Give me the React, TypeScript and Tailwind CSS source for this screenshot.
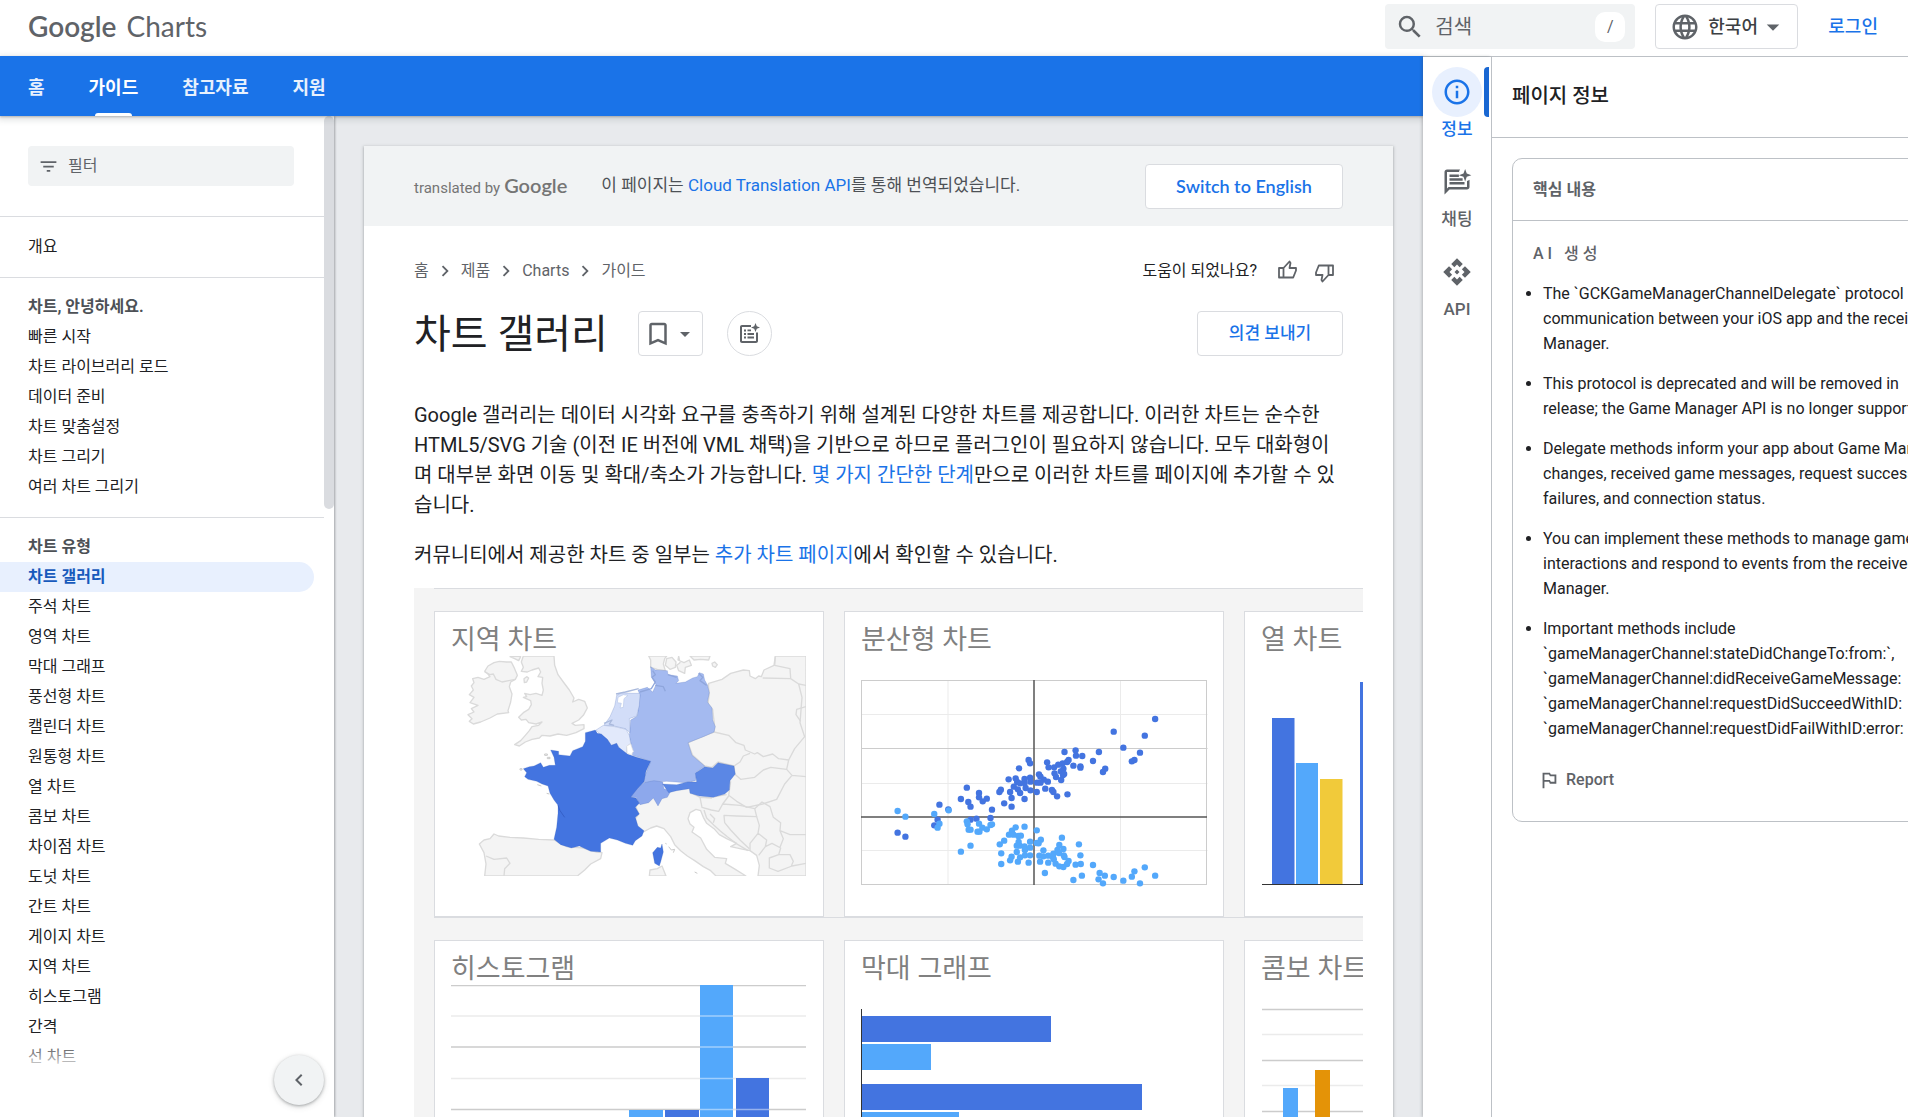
import React from 'react';
import {
  MdApi,
  MdArrowDropDown,
  MdBookmarkBorder,
  MdChevronLeft,
  MdChevronRight,
  MdFilterList,
  MdInfoOutline,
  MdLanguage,
  MdOutlinedFlag,
  MdSearch,
} from 'react-icons/md';

const BLUE = '#4374e0';
const SKY = '#53a8fb';

const navItems = ['홈', '가이드', '참고자료', '지원'];

const introLinks = ['빠른 시작', '차트 라이브러리 로드', '데이터 준비', '차트 맞춤설정', '차트 그리기', '여러 차트 그리기'];

const chartLinks = [
  '차트 갤러리',
  '주석 차트',
  '영역 차트',
  '막대 그래프',
  '풍선형 차트',
  '캘린더 차트',
  '원통형 차트',
  '열 차트',
  '콤보 차트',
  '차이점 차트',
  '도넛 차트',
  '간트 차트',
  '게이지 차트',
  '지역 차트',
  '히스토그램',
  '간격',
  '선 차트',
];

const takeaways = [
  [
    'The `GCKGameManagerChannelDelegate` protocol',
    'communication between your iOS app and the receiver',
    'Manager.',
  ],
  ['This protocol is deprecated and will be removed in', 'release; the Game Manager API is no longer supported.'],
  [
    'Delegate methods inform your app about Game Manager',
    'changes, received game messages, request success,',
    'failures, and connection status.',
  ],
  [
    'You can implement these methods to manage game',
    'interactions and respond to events from the receiver',
    'Manager.',
  ],
  [
    'Important methods include',
    '`gameManagerChannel:stateDidChangeTo:from:`,',
    '`gameManagerChannel:didReceiveGameMessage:',
    '`gameManagerChannel:requestDidSucceedWithID:',
    '`gameManagerChannel:requestDidFailWithID:error:',
  ],
];

function ChatSparkIcon() {
  return (
    <svg viewBox="0 0 24 24" className="size-[30px]" fill="currentColor" aria-hidden="true">
      <path d="M14.5 2H4c-1.1 0-2 .9-2 2v18l4-4h14c1.1 0 2-.9 2-2V10.2c-.6.5-1.3.8-2 1V16H5.2L4 17.2V4h9.600c.1-.8.4-1.500.9-2z" />
      <path d="M6 12h12v2H6zM6 9h10.500v2H6zM6 6h7.500v2H6z" />
      <path d="M18.500 1.500l1.300 3.700 3.700 1.300-3.700 1.300-1.300 3.700-1.300-3.700-3.700-1.300 3.700-1.300z" />
    </svg>
  );
}

function ListSparkIcon() {
  return (
    <svg viewBox="0 0 24 24" className="size-6" fill="currentColor" aria-hidden="true">
      <path d="M14 3H5c-1.100 0-2 .9-2 2v14c0 1.100.9 2 2 2h14c1.100 0 2-.9 2-2v-8.500h-2V19H5V5h9z" />
      <path d="M7 7.500h2v2H7zM7 11h2v2H7zM7 14.500h2v2H7zM10.500 7.500H14v1.800h-3.500zM10.500 11.100H17v1.800h-6.500zM10.500 14.600H17v1.800h-6.500z" />
      <path d="M18.500 1l1.300 3.200L23 5.500l-3.200 1.300L18.500 10l-1.300-3.200L14 5.500l3.200-1.300z" />
    </svg>
  );
}

const thumbPath = 'M2 9h4.500v9.500H2zM6.500 9L12.500 2.500 13.500 4 12.500 9H19v2.500L16.200 18.500H6.500';

function ThumbUpIcon() {
  return (
    <svg viewBox="0 0 21 21" className="mb-1 size-[21px]" fill="none" stroke="currentColor" strokeWidth="1.800" strokeLinejoin="round" aria-hidden="true">
      <path d={thumbPath} />
    </svg>
  );
}

function ThumbDownIcon() {
  return (
    <svg viewBox="0 0 21 21" className="mt-1 size-[21px]" fill="none" stroke="currentColor" strokeWidth="1.800" strokeLinejoin="round" aria-hidden="true">
      <path d={thumbPath} transform="rotate(180 10.5 10.5)" />
    </svg>
  );
}

/* ---------- Gallery drawings ---------- */

const landPaths = [
  'M340 228 L334 246 L340 262 L334 274 L352 276 L366 270 L386 264 L392 276 L384 290 L398 292 L396 310 L400 330 L396 346 L378 340 L360 344 L344 340 L350 350 L340 352 L362 362 L364 374 L356 388 L340 398 L326 412 L334 420 L348 418 L356 428 L378 432 L396 426 L386 436 L366 440 L358 452 L346 466 L332 482 L314 494 L328 498 L346 486 L366 478 L388 474 L396 466 L420 468 L444 462 L470 466 L498 458 L522 446 L522 434 L496 436 L486 430 L506 420 L520 406 L532 384 L524 364 L506 358 L488 366 L492 354 L478 330 L460 306 L444 284 L434 256 L432 228 Z',
  'M188 296 L204 292 L222 298 L240 290 L232 280 L224 274 L234 258 L252 248 L268 244 L290 246 L304 246 L312 262 L322 286 L316 298 L302 306 L298 320 L306 342 L302 366 L294 392 L296 398 L262 402 L240 414 L212 426 L190 432 L178 424 L186 416 L174 404 L192 396 L184 386 L204 376 L180 368 L192 352 L178 344 L190 330 L184 318 L192 308 Z',
  'M342 296 L350 290 L356 294 L350 306 L343 308 Z',
  'M300 230 L318 228 L332 230 L326 242 L314 236 Z',
  'M716 228 L722 240 L722 262 L742 268 L766 272 L760 252 L764 236 L770 228 Z',
  'M770 236 L786 232 L798 246 L796 262 L780 268 L766 256 Z',
  'M806 228 L804 240 L822 248 L838 240 L844 256 L826 262 L824 280 L806 272 L800 256 L810 248 Z',
  'M840 228 L852 240 L872 238 L896 240 L900 228 Z',
  'M906 250 L914 246 L922 254 L916 262 L908 258 Z',
  'M896 310 L936 298 L962 280 L1000 270 L1018 272 L1020 288 L1036 296 L1046 288 L1054 290 L1062 270 L1092 256 L1096 228 L1188 228 L1188 888 L1044 888 L1048 856 L1040 826 L1020 812 L1000 808 L962 800 L980 790 L950 776 L928 764 L912 746 L890 730 L880 712 L872 692 L858 688 L840 698 L834 716 L840 732 L852 742 L846 756 L872 774 L890 808 L914 832 L950 836 L946 850 L976 868 L1008 888 L918 888 L902 872 L880 860 L854 842 L832 828 L812 812 L794 794 L782 770 L762 746 L740 738 L722 744 L700 756 L680 744 L676 716 L686 702 L676 676 L700 640 L780 630 L840 620 L860 560 L834 488 L912 456 L894 370 Z',
  'M208 792 L222 780 L240 776 L252 762 L266 768 L300 772 L340 774 L386 778 L432 780 L470 800 L520 804 L560 816 L576 818 L572 836 L542 852 L524 870 L502 888 L224 888 L228 852 L222 818 Z',
  'M718 888 L720 870 L742 866 L756 858 L768 888 Z',
];

const borderPaths = [
  'M224 276 L240 284 L250 282 L258 298 L276 306 L296 302 L316 298',
  'M228 828 L252 838 L290 834 L300 850 L284 866 L282 888',
  'M894 314 L898 340 L894 370 L908 388 L914 440 L912 456 L956 466 L978 488 L1002 496 L1006 510 L1034 522 L1042 518 L1060 530 L1088 522 L1106 536 L1136 540 L1154 506 L1184 470 L1170 428 L1176 352 L1166 312 L1142 296 L1058 294 M912 456 L870 470 L834 488 L842 520 L884 558 L906 562 L924 546 L972 558',
  'M1096 230 L1094 256 L1140 266 L1142 294 M1166 312 L1188 316 M1188 380 L1160 388 L1158 404 L1172 424',
  'M972 558 L990 546 L1000 528 L1020 520 M972 558 L974 582 L992 598 L1034 592 L1060 570 L1082 562 L1130 568 L1136 540 M1130 568 L1146 586 L1188 590 M1146 586 L1124 612 L1100 658 L1058 672 L1010 682 L980 664 L956 646 L962 604',
  'M870 652 L876 682 L904 690 L926 694 L938 672 L956 648 M900 652 L950 644 M840 636 L870 652 L906 654 M938 672 L990 676 L1034 686 L1040 710 L980 708 L942 706 L944 728 L962 750 L990 780 L1018 806',
  'M1034 686 L1056 666 L1080 680 L1090 712 L1112 728 L1110 752 L1140 764 L1188 764 M1040 710 L1048 736 L1044 760 L1020 790 L1020 812 M1044 760 L1070 780 L1066 800 L1046 826 M1066 800 L1086 790 L1112 804 L1106 824 L1078 834 L1078 864 L1104 874 L1146 858 L1188 850 M1106 824 L1140 824 L1150 844 L1144 858 M1110 752 L1120 776 L1110 802',
  'M882 690 L890 714 L912 736 L930 752 L952 770 L984 794 L1014 812 M900 702 L914 716 L910 728',
];

const europe = [
  {
    name: 'germany',
    fill: '#a4baf0',
    d: 'M722 260 L736 270 L772 272 L774 284 L802 288 L806 302 L798 310 L826 306 L848 294 L862 290 L868 278 L880 282 L884 300 L892 314 L898 338 L892 366 L906 384 L908 420 L916 440 L912 456 L880 470 L834 488 L846 526 L884 558 L862 574 L856 602 L826 608 L770 604 L704 608 L702 594 L722 544 L668 526 L664 494 L658 470 L662 420 L682 408 L690 346 L684 330 L712 322 L728 336 L738 314 L724 290 Z',
  },
  {
    name: 'netherlands',
    fill: '#d2ddf8',
    d: 'M690 340 L688 376 L680 408 L658 416 L660 458 L646 446 L612 438 L582 436 L600 410 L614 378 L620 346 L634 338 L664 340 Z',
  },
  {
    name: 'belgium',
    fill: '#e2e9fb',
    d: 'M558 450 L580 436 L614 440 L648 448 L658 466 L662 490 L650 500 L650 522 L626 502 L620 490 L604 496 L592 478 L574 466 Z',
  },
  {
    name: 'switzerland',
    fill: '#8da8ec',
    d: 'M702 608 L732 602 L758 606 L762 626 L782 634 L772 652 L756 656 L744 678 L730 654 L716 668 L690 674 L678 652 L660 654 L680 626 Z',
  },
  {
    name: 'austria',
    fill: '#5b87e5',
    d: 'M758 612 L800 614 L832 606 L860 606 L856 580 L884 560 L908 564 L924 548 L972 558 L976 582 L960 602 L958 630 L944 642 L910 652 L868 648 L840 640 L838 626 L800 632 L776 638 Z',
  },
  {
    name: 'france',
    fill: BLUE,
    d: 'M526 458 L556 450 L562 460 L574 462 L592 478 L604 496 L620 490 L626 502 L652 522 L680 532 L722 544 L708 574 L702 606 L682 626 L662 652 L678 654 L688 670 L676 682 L688 702 L676 712 L684 738 L702 752 L696 768 L676 782 L668 796 L646 790 L622 780 L598 774 L572 790 L572 816 L542 814 L508 798 L484 804 L452 794 L432 778 L440 742 L444 700 L444 676 L432 660 L420 640 L414 618 L396 612 L380 604 L354 598 L344 590 L350 578 L340 566 L358 560 L372 558 L392 548 L400 562 L418 556 L436 556 L432 532 L422 510 L446 514 L446 524 L480 528 L488 512 L518 500 L526 484 Z',
  },
  { name: 'corsica', fill: BLUE, d: 'M756 792 L760 816 L752 846 L748 858 L734 850 L728 818 L742 802 L752 804 Z' },
];

function GeoChart() {
  return (
    <svg viewBox="123 228 1068 726" className="h-[242px] w-[356px]" role="img" aria-label="지역 차트">
      <clipPath id="map-area">
        <rect x="126" y="228" width="1062" height="660" />
      </clipPath>
      <g clipPath="url(#map-area)" strokeLinejoin="round">
        <g fill="#f4f4f4" stroke="#dadada" strokeWidth="4">
          {landPaths.map((d) => (
            <path key={d} d={d} />
          ))}
        </g>
        <g fill="none" stroke="#dadada" strokeWidth="4">
          {borderPaths.map((d) => (
            <path key={d} d={d} />
          ))}
        </g>
        {europe.map((c) => (
          <path key={c.name} d={c.d} fill={c.fill} stroke="#3c5fae" strokeOpacity=".3" strokeWidth="2" />
        ))}
        <path d="M624 352 L640 344 L654 346 L642 356 L640 382 L630 384 L634 370 L622 368 Z" fill="#fff" stroke="#b9c8e8" strokeWidth="2" />
        <path d="M650 498 L662 492 L670 514 L664 524 L652 520 Z" fill="#fff" stroke="#dcdcdc" strokeWidth="2" />
        <path d="M618 342 L646 336 L686 326 M582 430 L606 420 L598 432 L612 436" fill="none" stroke="#a9b9dc" strokeWidth="4" />
        <path d="M728 272 L736 284 L726 292 L736 306 L724 326 L690 336 M736 316 L760 320 L766 334 M774 284 L800 292 M866 280 L878 292 L870 302 L890 316" fill="none" stroke="#8fa6dc" strokeWidth="4" />
        <path d="M404 522 h8 v4 h-8z M412 532 h8 v4 h-8z M330 566 h6 v4 h-6z M382 614 l12 4 M410 640 l8 2 M776 800 l8 10 l10 -2 l-4 10 M854 876 l8 4 M766 790 l4 2" fill="none" stroke="#c9c9c9" strokeWidth="3" />
        <path d="M444 676 L450 692 L464 712" fill="none" stroke="#3560c8" strokeWidth="3" />
      </g>
    </svg>
  );
}

// Sample values on a 935 x 614 canvas, top-left origin.
const seriesA = [
  [795, 117], [683, 155], [767, 167], [709, 203], [754, 218], [739, 240], [732, 244], [660, 266], [654, 276], [643, 216],
  [627, 243], [580, 211], [581, 227], [598, 228], [550, 216], [561, 240], [574, 257], [593, 259], [593, 263], [545, 250],
  [503, 247], [507, 262], [522, 262], [533, 254], [547, 266], [540, 274], [523, 280], [546, 285], [527, 291], [541, 300],
  [481, 283], [485, 290], [494, 299], [505, 305], [485, 308], [476, 308], [498, 326], [516, 330], [520, 336], [530, 349],
  [558, 343], [453, 240], [457, 250], [427, 265], [399, 298], [418, 295], [422, 306], [442, 297], [442, 309], [457, 293],
  [458, 305], [430, 310], [413, 320], [424, 328], [445, 324], [458, 331], [475, 336], [430, 339], [403, 336], [378, 329],
  [374, 336], [407, 354], [442, 357], [387, 370], [407, 380], [354, 389], [350, 414], [340, 356], [319, 339], [319, 352],
  [329, 364], [286, 323], [270, 357], [290, 366], [296, 380], [312, 416], [296, 419], [212, 374], [236, 388], [207, 419],
  [198, 436], [99, 458], [120, 470], [557, 246], [549, 282],
];

const seriesB = [
  [99, 393], [120, 410], [198, 402], [237, 391], [212, 431], [207, 443], [286, 424], [288, 433], [291, 449], [296, 449],
  [319, 431], [328, 443], [315, 455], [320, 455], [340, 448], [354, 433], [350, 435], [296, 497], [270, 515], [375, 493],
  [387, 482], [400, 464], [408, 452], [418, 442], [442, 440], [412, 464], [425, 468], [432, 467], [426, 486], [421, 497],
  [429, 497], [457, 485], [442, 499], [457, 503], [443, 510], [421, 516], [430, 532], [407, 530], [403, 541], [424, 545],
  [443, 526], [457, 526], [379, 520], [379, 552], [453, 548], [475, 451], [486, 479], [480, 490], [475, 489], [493, 511],
  [482, 527], [493, 529], [484, 545], [506, 527], [506, 548], [520, 521], [519, 532], [526, 551], [536, 559], [543, 473],
  [536, 495], [531, 510], [547, 507], [548, 526], [550, 531], [535, 519], [561, 543], [557, 552], [547, 561], [580, 554],
  [593, 526], [594, 552], [589, 493], [597, 587], [574, 600], [627, 555], [645, 579], [642, 598], [654, 610], [659, 587],
  [683, 591], [709, 602], [732, 590], [739, 574], [754, 610], [767, 562], [795, 587], [497, 579], [521, 538],
];

function ScatterChart() {
  return (
    <svg viewBox="0 0 347 242" className="h-[242px] w-[347px]" role="img" aria-label="분산형 차트">
      <g fill="none" stroke="#ebebeb">
        <path d="M.5 58.500h346M.5 127.500h346M.5 194.500h346M87 24v204M259.500 24v204" />
        <path d="M.5 92.500h346" stroke="#ccc" />
        <rect x=".5" y="24.500" width="345" height="204" stroke="#ccc" />
      </g>
      <path d="M173 24v205M0 161h346" stroke="#555" strokeWidth="1.500" />
      {seriesA.map(([x, y], i) => (
        <circle key={i} cx={x * 0.37} cy={24 + y / 3} r="3.200" fill={BLUE} />
      ))}
      {seriesB.map(([x, y], i) => (
        <circle key={i} cx={x * 0.37} cy={24 + y / 3} r="3.200" fill={SKY} />
      ))}
    </svg>
  );
}

function ColumnChart() {
  return (
    <svg viewBox="0 0 346 242" className="h-[242px] w-[346px]" role="img" aria-label="열 차트">
      <rect x="11" y="62" width="22.500" height="166" fill={BLUE} />
      <rect x="35" y="107" width="22" height="121" fill={SKY} />
      <rect x="59" y="123" width="22.500" height="105" fill="#f1ca3a" />
      <rect x="99" y="26" width="22" height="202" fill={BLUE} />
      <path d="M1 228.500h345" stroke="#333" />
    </svg>
  );
}

function Histogram() {
  return (
    <svg viewBox="0 0 356 242" className="h-[242px] w-[356px]" role="img" aria-label="히스토그램">
      <path d="M0 .5h355M0 62h355M0 124.500h355" stroke="#ccc" strokeWidth="1.500" />
      <path d="M0 31h355M0 93.500h355" stroke="#ebebeb" strokeWidth="1.500" />
      <rect x="249" y="0" width="33" height="242" fill={SKY} />
      <rect x="285" y="93" width="33" height="149" fill={BLUE} />
      <rect x="178" y="125" width="34" height="117" fill={SKY} />
      <rect x="214" y="125" width="34" height="117" fill={BLUE} />
      <path d="M249 31h33M249 62h33M249 93.500h33M249 124.500h69" stroke="#fff" strokeOpacity=".45" strokeWidth="1.500" />
    </svg>
  );
}

function BarChart() {
  return (
    <svg viewBox="0 0 347 242" className="h-[242px] w-[347px]" role="img" aria-label="막대 그래프">
      <rect x="1" y="31" width="189" height="26" fill={BLUE} />
      <rect x="1" y="59" width="69" height="26" fill={SKY} />
      <rect x="1" y="99" width="280" height="26" fill={BLUE} />
      <rect x="1" y="127" width="97" height="26" fill={SKY} />
      <path d="M.5 24v218" stroke="#333" />
    </svg>
  );
}

function ComboChart() {
  return (
    <svg viewBox="0 0 346 242" className="h-[242px] w-[346px]" role="img" aria-label="콤보 차트">
      <path d="M1 24.500h345M1 75.500h345M1 126.500h345" stroke="#ccc" strokeWidth="1.500" />
      <path d="M1 49.500h345M1 100.500h345" stroke="#ebebeb" strokeWidth="1.500" />
      <rect x="22" y="103" width="15" height="139" fill={SKY} />
      <rect x="54" y="85" width="15" height="157" fill="#e49307" />
    </svg>
  );
}

function GalleryCard({ title, wide, children }: { title: string; wide?: boolean; children: React.ReactNode }) {
  return (
    <article
      className={
        (wide ? 'w-[390px]' : 'w-[380px]') + ' shrink-0 border border-[#dadce0] bg-white px-4 pt-3 pb-[18px]'
      }
    >
      <h3 className="text-[27px] leading-8 text-[#808080]">{title}</h3>
      {children}
    </article>
  );
}

/* ---------- Page regions ---------- */

function TopBar() {
  return (
    <header className="flex h-14 shrink-0 items-center justify-between bg-white pl-7">
      <a href="#" className="flex items-baseline gap-2.5 pb-1 font-['Lato'] text-[28px] leading-9 text-[#5f6368]">
        <span className="font-semibold">Google</span>
        <span>Charts</span>
      </a>
      <div className="flex items-center self-start pt-1">
        <label className="flex h-[45px] w-[250px] items-center rounded bg-[#f1f3f4] pr-2.5 pl-2.5 text-[#5f6368]">
          <MdSearch className="size-[30px] shrink-0" />
          <input
            type="search"
            aria-label="검색"
            placeholder="검색"
            className="ml-2.5 min-w-0 flex-1 bg-transparent text-xl outline-none placeholder:text-[#5f6368]"
          />
          <kbd className="flex h-[30px] w-[30px] items-center justify-center rounded-[10px] bg-white font-['Roboto'] text-base">/</kbd>
        </label>
        <label className="ml-5 flex h-[45px] w-[143px] items-center rounded border border-[#dadce0] pl-3.5 text-[#5f6368]">
          <MdLanguage className="size-[30px]" />
          <select
            aria-label="언어"
            className="ml-2 appearance-none bg-transparent text-[18px] font-medium text-[#3c4043] outline-none"
          >
            <option>한국어</option>
          </select>
          <MdArrowDropDown className="size-[30px]" />
        </label>
        <a href="#" className="px-[30px] text-[18px] font-medium text-[#1a73e8]">
          로그인
        </a>
      </div>
    </header>
  );
}

function NavBar() {
  return (
    <nav className="relative z-10 flex h-[60px] shrink-0 gap-11 bg-[#1a73e8] px-7 shadow-[0_1px_2px_rgba(60,64,67,0.3),0_2px_6px_2px_rgba(60,64,67,0.15)]">
      {navItems.map((item) => (
        <a
          key={item}
          href="#"
          className={
            (item === '가이드' ? 'text-white' : 'text-white/90') +
            ' relative flex items-center pt-0.5 text-[18px] font-bold'
          }
        >
          {item}
          {item === '가이드' && <span className="absolute inset-x-1.5 bottom-0 h-[3px] rounded-t bg-white" />}
        </a>
      ))}
    </nav>
  );
}

function SideNav() {
  return (
    <aside className="relative z-[1] flex w-[334px] shrink-0 bg-white text-base text-[#202124] shadow-[1px_0_2px_rgba(60,64,67,0.4)]">
      <div className="flex-1 overflow-hidden">
        <div className="pt-[30px] pr-[30px] pb-[30px] pl-7">
          <label className="flex h-10 items-center rounded bg-[#f1f3f4] pl-[10px] text-[#5f6368]">
            <MdFilterList className="size-[21px]" />
            <input
              type="text"
              aria-label="필터"
              placeholder="필터"
              className="ml-[9px] min-w-0 flex-1 bg-transparent text-base outline-none placeholder:text-[#5f6368]"
            />
          </label>
        </div>
        <ul className="border-t border-[#dadce0] py-[15px] leading-[30px]">
          <li className="pl-7">
            <a href="#">개요</a>
          </li>
        </ul>
        <div className="border-t border-[#dadce0] pt-3.5 pb-[15px] leading-[30px]">
          <h2 className="pl-7 font-bold text-[#4d5156]">차트, 안녕하세요.</h2>
          <ul>
            {introLinks.map((t) => (
              <li key={t} className="pl-7">
                <a href="#">{t}</a>
              </li>
            ))}
          </ul>
        </div>
        <div className="border-t border-[#dadce0] pt-3.5 leading-[30px]">
          <h2 className="pl-7 font-bold text-[#4d5156]">차트 유형</h2>
          <ul>
            {chartLinks.map((t, i) => (
              <li
                key={t}
                className={i === 0 ? 'mr-2.5 rounded-r-full bg-[#e8f0fe] pl-7 font-bold text-[#185abc]' : 'pl-7'}
              >
                <a href="#">{t}</a>
              </li>
            ))}
          </ul>
        </div>
      </div>
      <div className="h-[393px] w-2.5 rounded-full bg-[#dadce0]" />
      <div className="absolute inset-x-0 bottom-0 h-20 bg-linear-to-t from-white from-55% to-transparent" />
      <button
        aria-label="탐색 메뉴 숨기기"
        className="absolute right-2.5 bottom-3 flex size-[50px] items-center justify-center rounded-full bg-[#f1f3f4] text-[#5f6368] shadow-[0_1px_3px_rgba(60,64,67,0.4),0_2px_6px_rgba(60,64,67,0.15)]"
      >
        <MdChevronLeft className="size-6" />
      </button>
    </aside>
  );
}

function Article() {
  return (
    <main className="min-w-0 flex-1 overflow-hidden bg-[#e8eaed] px-[30px] pt-[30px]">
      <div className="min-h-full bg-white shadow-[0_1px_2px_rgba(60,64,67,0.3),0_1px_3px_1px_rgba(60,64,67,0.15)]">
        <div className="flex h-20 items-center bg-[#f1f3f4] px-[50px]">
          <p className="flex items-baseline gap-1 text-[15px] text-[#757575]">
            translated by <span className="font-['Lato'] text-xl leading-6 font-semibold">Google</span>
          </p>
          <p className="ml-[34px] flex-1 text-[17px] text-[#4d5156]">
            이 페이지는{' '}
            <a href="#" className="text-[#1a73e8]">
              Cloud Translation API
            </a>
            를 통해 번역되었습니다.
          </p>
          <button className="h-[45px] w-[198px] rounded border border-[#dadce0] bg-white font-['Lato'] text-[18px] font-semibold text-[#1a73e8]">
            Switch to English
          </button>
        </div>

        <div className="px-[50px] pt-[27px]">
          <div className="flex h-9 items-center justify-between text-base">
            <nav className="flex items-center gap-[5px] text-[#5f6368]" aria-label="breadcrumb">
              <a href="#">홈</a>
              <MdChevronRight className="size-[22px]" />
              <a href="#">제품</a>
              <MdChevronRight className="size-[22px]" />
              <a href="#">Charts</a>
              <MdChevronRight className="size-[22px]" />
              <a href="#">가이드</a>
            </nav>
            <div className="flex items-center text-[#202124]">
              도움이 되었나요?
              <button aria-label="도움이 됨" className="ml-5 text-[#5f6368]">
                <ThumbUpIcon />
              </button>
              <button aria-label="도움이 되지 않음" className="mr-2 ml-4 text-[#5f6368]">
                <ThumbDownIcon />
              </button>
            </div>
          </div>

          <div className="mt-[22px] flex h-[45px] items-center text-[#5f6368]">
            <h1 className="pt-0.5 text-[40px] leading-[45px] text-[#202124]">차트 갤러리</h1>
            <button
              aria-label="북마크"
              className="ml-[30px] flex h-[45px] w-[65px] items-center rounded border border-[#dadce0] pl-1"
            >
              <MdBookmarkBorder className="size-[30px]" />
              <MdArrowDropDown className="size-6" />
            </button>
            <button
              aria-label="핵심 내용"
              className="ml-6 flex size-[45px] items-center justify-center rounded-full border border-[#dadce0]"
            >
              <ListSparkIcon />
            </button>
            <button className="ml-auto h-[45px] w-[146px] rounded border border-[#dadce0] text-[17px] font-medium text-[#1a73e8]">
              의견 보내기
            </button>
          </div>

          <p className="mt-11 text-xl leading-[30px] text-[#202124]">
            Google 갤러리는 데이터 시각화 요구를 충족하기 위해 설계된 다양한 차트를 제공합니다. 이러한 차트는 순수한
            HTML5/SVG 기술 (이전 IE 버전에 VML 채택)을 기반으로 하므로 플러그인이 필요하지 않습니다. 모두 대화형이며
            대부분 화면 이동 및 확대/축소가 가능합니다.{' '}
            <a href="#" className="text-[#1a73e8]">
              몇 가지 간단한 단계
            </a>
            만으로 이러한 차트를 페이지에 추가할 수 있습니다.
          </p>
          <p className="mt-5 text-xl leading-[30px] text-[#202124]">
            커뮤니티에서 제공한 차트 중 일부는{' '}
            <a href="#" className="text-[#1a73e8]">
              추가 차트 페이지
            </a>
            에서 확인할 수 있습니다.
          </p>

          <div className="-mr-5 mt-[18px] overflow-hidden bg-[#f4f4f4] pl-5">
            <section className="flex gap-5 border-t border-[#dadce0] pt-[22px]">
              <GalleryCard title="지역 차트" wide>
                <GeoChart />
              </GalleryCard>
              <GalleryCard title="분산형 차트">
                <ScatterChart />
              </GalleryCard>
              <GalleryCard title="열 차트">
                <ColumnChart />
              </GalleryCard>
            </section>
            <section className="flex gap-5 border-t border-[#dadce0] pt-[22px]">
              <GalleryCard title="히스토그램" wide>
                <Histogram />
              </GalleryCard>
              <GalleryCard title="막대 그래프">
                <BarChart />
              </GalleryCard>
              <GalleryCard title="콤보 차트">
                <ComboChart />
              </GalleryCard>
            </section>
          </div>
        </div>
      </div>
    </main>
  );
}

function ToolRail() {
  return (
    <div className="relative z-20 flex w-[68px] shrink-0 flex-col items-center gap-[15px] bg-white pt-2.5 text-[17px] font-medium text-[#5f6368] shadow-[-1px_0_3px_rgba(60,64,67,0.3)]">
      <button className="flex w-full flex-col items-center text-[#1a73e8]">
        <span className="flex size-[50px] items-center justify-center rounded-full bg-[#e8f0fe]">
          <MdInfoOutline className="size-[30px]" />
        </span>
        <span className="leading-[25px]">정보</span>
        <span className="absolute top-2.5 right-0.5 h-[50px] w-[5px] rounded-l bg-[#1967d2]" />
      </button>
      <button className="flex flex-col items-center">
        <span className="flex size-[50px] items-center justify-center">
          <ChatSparkIcon />
        </span>
        <span className="leading-[25px]">채팅</span>
      </button>
      <button className="flex flex-col items-center">
        <span className="flex size-[50px] items-center justify-center">
          <MdApi className="size-[30px]" />
        </span>
        <span className="leading-[25px]">API</span>
      </button>
    </div>
  );
}

function InfoPanel() {
  return (
    <aside className="relative z-20 w-[417px] shrink-0 overflow-hidden border-l border-[#bdc1c6] bg-white">
      <h2 className="border-b border-[#bdc1c6] pt-6 pb-[26px] pl-5 text-xl leading-[30px] font-medium text-[#202124]">
        페이지 정보
      </h2>
      <div className="mt-5 ml-5 w-[480px] rounded-[10px] border border-[#bdc1c6]">
        <h3 className="border-b border-[#bdc1c6] py-[18px] pl-5 text-base leading-[25px] font-bold text-[#5f6368]">
          핵심 내용
        </h3>
        <p className="pt-5 pl-5 text-base leading-[25px] font-medium tracking-[4px] text-[#5f6368]">AI 생성</p>
        <ul className="flex list-disc flex-col gap-[15px] pt-[15px] pl-[30px] text-base leading-[25px] text-[#202124]">
          {takeaways.map((lines) => (
            <li key={lines[0]} className="whitespace-nowrap">
              {lines.map((line) => (
                <span key={line} className="block first:inline-block first:align-top">
                  {line}
                </span>
              ))}
            </li>
          ))}
        </ul>
        <button className="mt-[26px] mb-[29px] ml-[25px] flex items-center gap-1.5 text-base leading-[25px] font-medium text-[#5f6368]">
          <MdOutlinedFlag className="size-[22px]" />
          Report
        </button>
      </div>
    </aside>
  );
}

export default function App() {
  return (
    <div className="flex h-screen flex-col overflow-hidden bg-white font-['Roboto','Noto_Sans_CJK_KR',sans-serif]">
      <TopBar />
      <div className="flex min-h-0 flex-1">
        <div className="flex min-w-0 flex-1 flex-col">
          <NavBar />
          <div className="flex min-h-0 flex-1">
            <SideNav />
            <Article />
          </div>
        </div>
        <div className="flex shrink-0 border-t border-[#bdc1c6]">
          <ToolRail />
          <InfoPanel />
        </div>
      </div>
    </div>
  );
}
